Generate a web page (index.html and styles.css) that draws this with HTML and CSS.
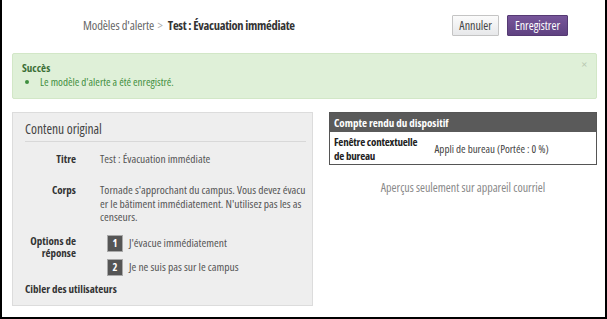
FILE: index.html
```html
<!DOCTYPE html>
<html lang="fr">
  <head>
    <meta charset="utf-8">
    <title>Modèles d'alerte</title>
    <link rel="stylesheet" href="styles.css">
  </head>
  <body>
    <div class="frame">

      <div class="topBar">
        <div class="crumbs">
          <span class="crumbLink">Modèles d'alerte</span>
          <span class="crumbSep">&gt;</span>
          <span class="crumbCurrent">Test : Évacuation immédiate</span>
        </div>
        <div class="actions">
          <button class="btn btnCancel">Annuler</button>
          <button class="btn btnSave">Enregistrer</button>
        </div>
      </div>

      <div class="alertSuccess">
        <span class="alertClose">×</span>
        <p class="alertTitle">Succès</p>
        <ul>
          <li>Le modèle d'alerte a été enregistré.</li>
        </ul>
      </div>

      <div class="columns">
        <div class="panel">
          <h3 class="panelTitle">Contenu original</h3>
          <div class="fieldRow titleRow">
            <div class="fieldLabel">Titre</div>
            <div class="fieldValue">Test : Évacuation immédiate</div>
          </div>
          <div class="fieldRow bodyRow">
            <div class="fieldLabel">Corps</div>
            <div class="fieldValue bodyText">Tornade s'approchant du campus. Vous devez évacu<br>er le bâtiment immédiatement. N'utilisez pas les as<br>censeurs.</div>
          </div>
          <div class="fieldRow optionsRow">
            <div class="fieldLabel">Options de réponse</div>
            <div class="optionList">
              <div class="option"><span class="optNum">1</span>J'évacue immédiatement</div>
              <div class="option"><span class="optNum">2</span>Je ne suis pas sur le campus</div>
            </div>
          </div>
          <div class="targetLabel">Cibler des utilisateurs</div>
        </div>

        <div class="devices">
          <table class="deviceTable">
            <colgroup>
              <col class="colName">
              <col>
            </colgroup>
            <tr><th colspan="2">Compte rendu du dispositif</th></tr>
            <tr>
              <td class="devName">Fenêtre contextuelle de bureau</td>
              <td class="devApp">Appli de bureau (Portée : 0 %)</td>
            </tr>
          </table>
          <p class="previewNote">Aperçus seulement sur appareil courriel</p>
        </div>
      </div>

    </div>
  </body>
</html>
```

FILE: styles.css
```css
body{
  margin: 0;
  font-family: "Open Sans", "Liberation Sans", sans-serif;
  font-stretch: 75%;
  font-size: 11.5px;
  color: #555;
  background: #fff;
}

.frame{
  box-sizing: border-box;
  height: 319px;
  border-left: 2px solid #000;
  border-right: 2px solid #000;
  border-bottom: 2px solid #000;
  padding: 0 8px 0 10px;
}

/* header */
.topBar{
  display: flex;
  align-items: center;
  justify-content: space-between;
  height: 50px;
  padding: 0 29px 0 71px;
}
.crumbs{
  font-size: 12.5px;
  color: #666;
  letter-spacing: -0.1px;
}
.crumbSep{
  color: #b0b0b0;
  margin: 0 3px 0 1px;
}
.crumbCurrent{
  font-weight: bold;
  color: #333;
  letter-spacing: -0.3px;
}

.actions{
  display: flex;
  gap: 8px;
}
.btn{
  font-family: inherit;
  font-stretch: 75%;
  font-size: 12px;
  height: 21px;
  padding: 0 7px;
  border-radius: 1px;
  cursor: pointer;
}
.btnCancel{
  background: linear-gradient(#fbfbfb, #e7e8ea);
  border: 1px solid #c4c4c4;
  color: #444;
  padding: 0 6px;
}
.btnSave{
  background: linear-gradient(#77569a, #5f4281);
  border: 1px solid #553a73;
  color: #fff;
}

/* alert */
.alertSuccess{
  position: relative;
  margin-top: 3px;
  background: #dff0d8;
  border: 1px solid #d2e7c7;
  border-radius: 2px;
  color: #3c8a3c;
  font-size: 11px;
  line-height: 14px;
  padding: 7px 9px 9px;
}
.alertTitle{
  margin: 0;
  font-weight: bold;
  color: #3b6f36;
}
.alertSuccess ul{
  margin: 0;
  padding-left: 18px;
  color: #3f8f3f;
}
.alertClose{
  position: absolute;
  right: 9px;
  top: 3px;
  font-size: 13px;
  color: #b8c8b2;
}

/* columns */
.columns{
  display: flex;
  align-items: flex-start;
  gap: 16px;
  margin-top: 13px;
}

.panel{
  box-sizing: border-box;
  width: 301px;
  height: 194px;
  flex-shrink: 0;
  background: #eee;
  border: 1px solid #dcdcdc;
  padding: 0 6px 0 12px;
}
.panelTitle{
  font-weight: normal;
  font-size: 13.5px;
  font-stretch: 82%;
  line-height: 16px;
  color: #444;
  margin: 8px 0 0;
  padding: 0 0 4px;
  border-bottom: 1px solid #d8d8d8;
}

.fieldRow{
  display: grid;
  grid-template-columns: 51px auto;
  column-gap: 24px;
  line-height: 14px;
}
.titleRow{
  margin-top: 10px;
}
.bodyRow{
  margin-top: 17px;
  line-height: 13.5px;
}
.fieldLabel{
  text-align: right;
  font-weight: bold;
  font-size: 11px;
  color: #333;
}
.bodyText{
  white-space: nowrap;
}

.optionsRow{
  margin-top: 11px;
  line-height: 12px;
}
.optionList{
  display: flex;
  flex-direction: column;
  gap: 7px;
  padding-left: 7px;
}
.option{
  display: flex;
  align-items: center;
  height: 17px;
}
.optNum{
  box-sizing: border-box;
  width: 16px;
  height: 17px;
  line-height: 15px;
  background: #555;
  border: 1px solid #a9a9a9;
  color: #fff;
  font-weight: bold;
  font-size: 10.5px;
  text-align: center;
  margin-right: 6px;
}

.targetLabel{
  font-weight: bold;
  font-size: 11px;
  line-height: 14px;
  color: #333;
  margin-top: 6px;
}

/* device preview */
.devices{
  flex: 1;
}
.deviceTable{
  width: 100%;
  border-collapse: collapse;
  border: 1px solid #555;
  table-layout: fixed;
}
.colName{
  width: 101px;
}
.deviceTable th{
  background: #5a5a5a;
  color: #fff;
  text-align: left;
  font-size: 11px;
  line-height: 14px;
  padding: 3px 4px 2px;
}
.deviceTable td{
  padding: 3px 4px 1px;
  line-height: 14px;
  font-size: 11px;
  color: #444;
}
.deviceTable .devName{
  font-weight: bold;
  color: #222;
  letter-spacing: -0.2px;
  padding-right: 12px;
}
.previewNote{
  text-align: center;
  color: #888;
  font-size: 12px;
  line-height: 16px;
  margin: 15px 0 0;
}
```
